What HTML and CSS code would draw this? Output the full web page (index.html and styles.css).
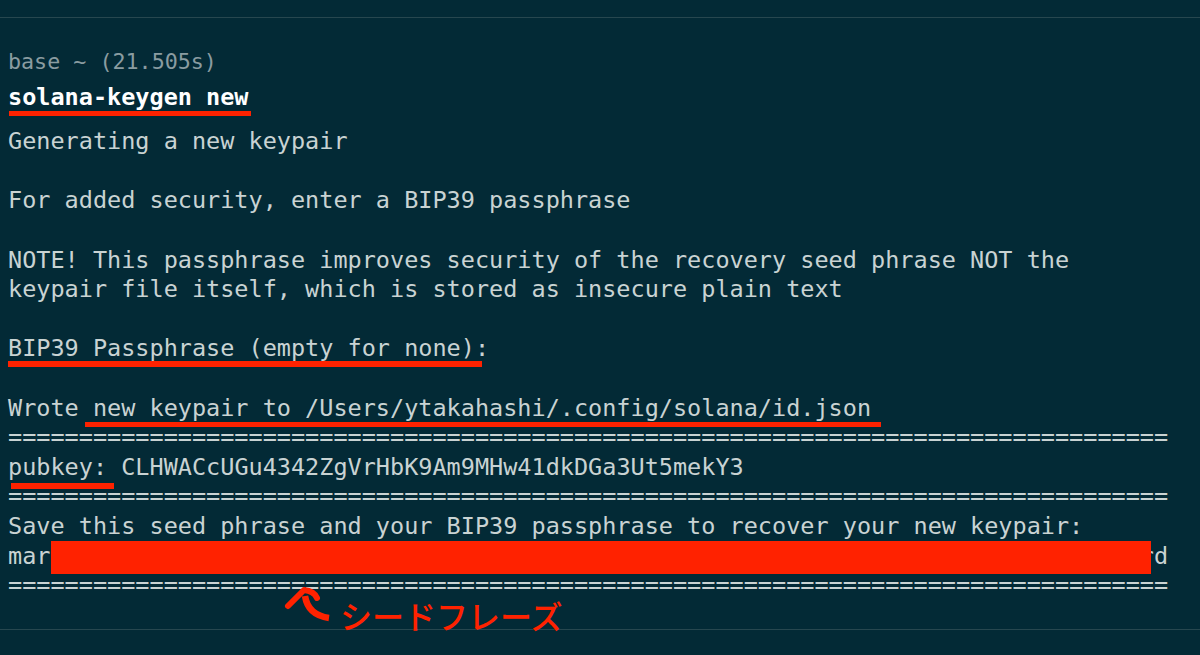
FILE: index.html
```html
<!DOCTYPE html>
<html lang="ja">
<head>
  <meta charset="UTF-8" />
  <meta name="viewport" content="width=device-width, initial-scale=1" />
  <title>solana-keygen new</title>
  <link rel="stylesheet" href="styles.css">
</head>
<body>
  <div class="terminal">
    <div class="block">
      <div class="prompt">base ~ (21.505s)</div>
      <div class="command"><span class="mark mark-cmd">solana-keygen new</span></div>

<pre class="output">Generating a new keypair

For added security, enter a BIP39 passphrase

NOTE! This passphrase improves security of the recovery seed phrase NOT the
keypair file itself, which is stored as insecure plain text

<span class="mark mark-bip">BIP39 Passphrase (empty for none):</span>

Wrote <span class="mark mark-wrote">new keypair to /Users/ytakahashi/.config/solana/id.json</span>
==================================================================================
<span class="mark mark-pub">pubkey:</span> CLHWACcUGu4342ZgVrHbK9Am9MHw41dkDGa3Ut5mekY3
==================================================================================
Save this seed phrase and your BIP39 passphrase to recover your new keypair:
<span class="seed">mar                                                                             rd<span class="redact"></span></span>
==================================================================================</pre>

      <div class="caption">
        <svg class="arrow" width="60" height="44" viewBox="0 0 60 44">
          <path d="M16 22 L32 6 Q42 7 45 14" fill="none" stroke="#ff2200" stroke-width="6" stroke-linecap="round" stroke-linejoin="round"/>
          <path d="M33 12 Q36 31 57 34" fill="none" stroke="#ff2200" stroke-width="6.5" stroke-linecap="butt"/>
        </svg>
        <span class="caption-text">シードフレーズ</span>
      </div>
    </div>
  </div>
</body>
</html>
```

FILE: styles.css
```css
/* Warp-style dark terminal */
body {
  margin: 0;
  background: #032a36;
  font-family: 'DejaVu Sans Mono', 'Liberation Mono', monospace;
  color: #c9d3d3;
  height: 655px;
  overflow: hidden;
}

.terminal {
  padding-top: 17px;
}

.block {
  border-top: 1px solid #27474f;
  border-bottom: 1px solid #27474f;
  padding: 29px 0 0 8px;
  height: 613px;
  box-sizing: border-box;
}

.prompt {
  font-size: 21.7px;
  line-height: 29.6px;
  color: #8a9ca1;
}

.command {
  margin-top: 6px;
  font-size: 23.5px;
  line-height: 29.6px;
  font-weight: bold;
  color: #ffffff;
}

.output {
  margin: 15px 0 0;
  font-family: inherit;
  font-size: 23.5px;
  line-height: 29.6px;
  white-space: pre;
}

/* red annotation underlines */
.mark {
  position: relative;
}

.mark::after {
  content: "";
  position: absolute;
  top: 100%;
  left: 0;
  right: 0;
  height: 5px;
  background: #ff2200;
}

.mark-cmd::after { left: 1px; right: -2px; }
.mark-bip::after { right: 7px; top: calc(100% - 1px); height: 6px; }
.mark-wrote::after { left: -8px; right: -10px; }
.mark-pub::after { left: 3px; right: -7px; top: calc(100% + 2px); height: 6px; }

.seed {
  position: relative;
}

.redact {
  position: absolute;
  left: 43px;
  top: -1px;
  width: 1100px;
  height: 33px;
  background: #ff2200;
}

.caption {
  position: relative;
  height: 29px;
  padding-left: 332px;
}

.arrow {
  position: absolute;
  left: 264px;
  top: -17px;
}

.caption-text {
  font-family: 'Noto Sans CJK JP', sans-serif;
  font-size: 32px;
  font-weight: 500;
  line-height: 29px;
  color: #ff2200;
}
```
